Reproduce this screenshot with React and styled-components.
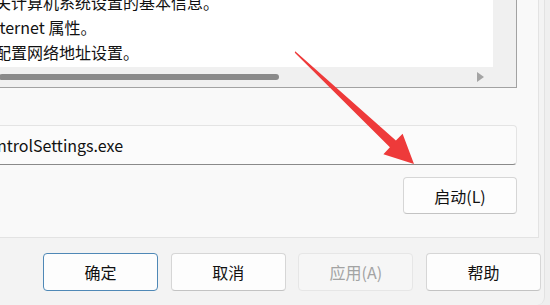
import React from "react";
import styled, { createGlobalStyle } from "styled-components";

const Global = createGlobalStyle`
  html, body { margin: 0; padding: 0; }
  body {
    width: 550px; height: 305px; overflow: hidden;
    background: #efefef;
    font-family: "Noto Sans CJK SC", "Noto Sans", sans-serif;
    color: #111111;
  }
`;

const Root = styled.div`
  position: relative;
  width: 550px;
  height: 305px;
  display: flex;
  overflow: hidden;
`;

const Dialog = styled.div`
  width: 545px;
  height: 305px;
  background: #f3f3f3;
  display: flex;
  flex-direction: column;
  border-right: 1px solid #e2e2e2;
  border-bottom-right-radius: 8px;
  box-sizing: border-box;
`;

const TabPage = styled.div`
  width: 539px;
  height: 238px;
  flex: none;
  box-sizing: border-box;
  background: #f9f9f9;
  border-right: 1px solid #e3e3e3;
  border-bottom: 1px solid #e3e3e3;
  display: flex;
  flex-direction: column;
  align-items: flex-start;
  overflow: hidden;
`;

const ListBox = styled.div`
  margin: -12px 0 0 -2px;
  width: 519px;
  height: 100px;
  flex: none;
  box-sizing: border-box;
  border: 1px solid #a2a2a2;
  display: grid;
  grid-template-columns: 1fr 23px;
  grid-template-rows: 1fr 20px;
  background: #f0f0f0;
`;

const List = styled.div`
  background: #ffffff;
  padding-top: 1px;
  overflow: hidden;
`;

const Line = styled.div`
  height: 25px;
  line-height: 25px;
  font-size: 16px;
  white-space: nowrap;
  margin-left: ${(p) => p.$shift}px;
`;

const VTrack = styled.div`
  background: #f0f0f0;
`;

const HTrack = styled.div`
  background: #f0f0f0;
  display: flex;
  align-items: center;
  justify-content: space-between;
  padding-right: 9px;
`;

const Thumb = styled.div`
  width: 280px;
  height: 6px;
  border-radius: 3px;
  background: #8a8a8a;
`;

const RightArrow = styled.div`
  width: 0;
  height: 0;
  border-top: 5px solid transparent;
  border-bottom: 5px solid transparent;
  border-left: 7px solid #a4a4a4;
`;

const Corner = styled.div`
  background: #f0f0f0;
`;

const PathBox = styled.div`
  margin: 37px 0 0 -4px;
  width: 521px;
  height: 40px;
  flex: none;
  box-sizing: border-box;
  background: #fbfbfb;
  border: 1px solid #e4e4e4;
  border-bottom: 1px solid #8a8a8a;
  border-radius: 4px;
  display: flex;
  align-items: center;
  overflow: hidden;
`;

const PathText = styled.span`
  font-size: 16px;
  white-space: nowrap;
  margin-left: -20px;
`;

const Button = styled.button`
  width: ${(p) => p.$w || 115}px;
  height: ${(p) => p.$h || 38}px;
  flex: none;
  box-sizing: border-box;
  padding: 0;
  font-family: "Noto Sans CJK SC", "Noto Sans", sans-serif;
  font-size: 16px;
  color: ${(p) => (p.$disabled ? "#a3a3a3" : "#111111")};
  background: ${(p) => (p.$disabled ? "#f6f6f6" : "#fdfdfd")};
  border: ${(p) =>
    p.$primary ? "1.5px solid #4f88b6" : p.$disabled ? "1px solid #e6e6e6" : "1px solid #d6d6d6"};
  border-bottom-color: ${(p) => (p.$primary ? "#4f88b6" : p.$disabled ? "#e6e6e6" : "#c3c3c3")};
  border-radius: 4px;
`;

const LaunchRow = styled.div`
  align-self: stretch;
  display: flex;
  justify-content: flex-end;
  padding-right: 21px;
  margin-top: 12px;
`;

const Footer = styled.div`
  flex: 1;
  display: flex;
  align-items: flex-start;
  padding: 15px 0 0 43px;
  gap: 12.7px;
`;

const Overlay = styled.svg`
  position: absolute;
  left: 0;
  top: 0;
  pointer-events: none;
`;

export default function App() {
  return (
    <>
      <Global />
      <Root>
        <Dialog>
          <TabPage>
            <ListBox>
              <List>
                <Line $shift={-20}>有关计算机系统设置的基本信息。</Line>
                <Line $shift={-14}>Internet 属性。</Line>
                <Line $shift={-4}>配置网络地址设置。</Line>
              </List>
              <VTrack />
              <HTrack>
                <Thumb />
                <RightArrow />
              </HTrack>
              <Corner />
            </ListBox>
            <PathBox>
              <PathText>ControlSettings.exe</PathText>
            </PathBox>
            <LaunchRow>
              <Button $w={114} $h={37}>启动(L)</Button>
            </LaunchRow>
          </TabPage>
          <Footer>
            <Button $primary>确定</Button>
            <Button>取消</Button>
            <Button $disabled>应用(A)</Button>
            <Button>帮助</Button>
          </Footer>
        </Dialog>
        <Overlay width="550" height="305" viewBox="0 0 550 305">
          <polygon
            points="295.2,51.2 395.9,140.6 402.6,133.8 414,164 383.4,154.2 389.9,147.3 294.8,52.8"
            fill="#ee3a3a"
          />
        </Overlay>
      </Root>
    </>
  );
}
